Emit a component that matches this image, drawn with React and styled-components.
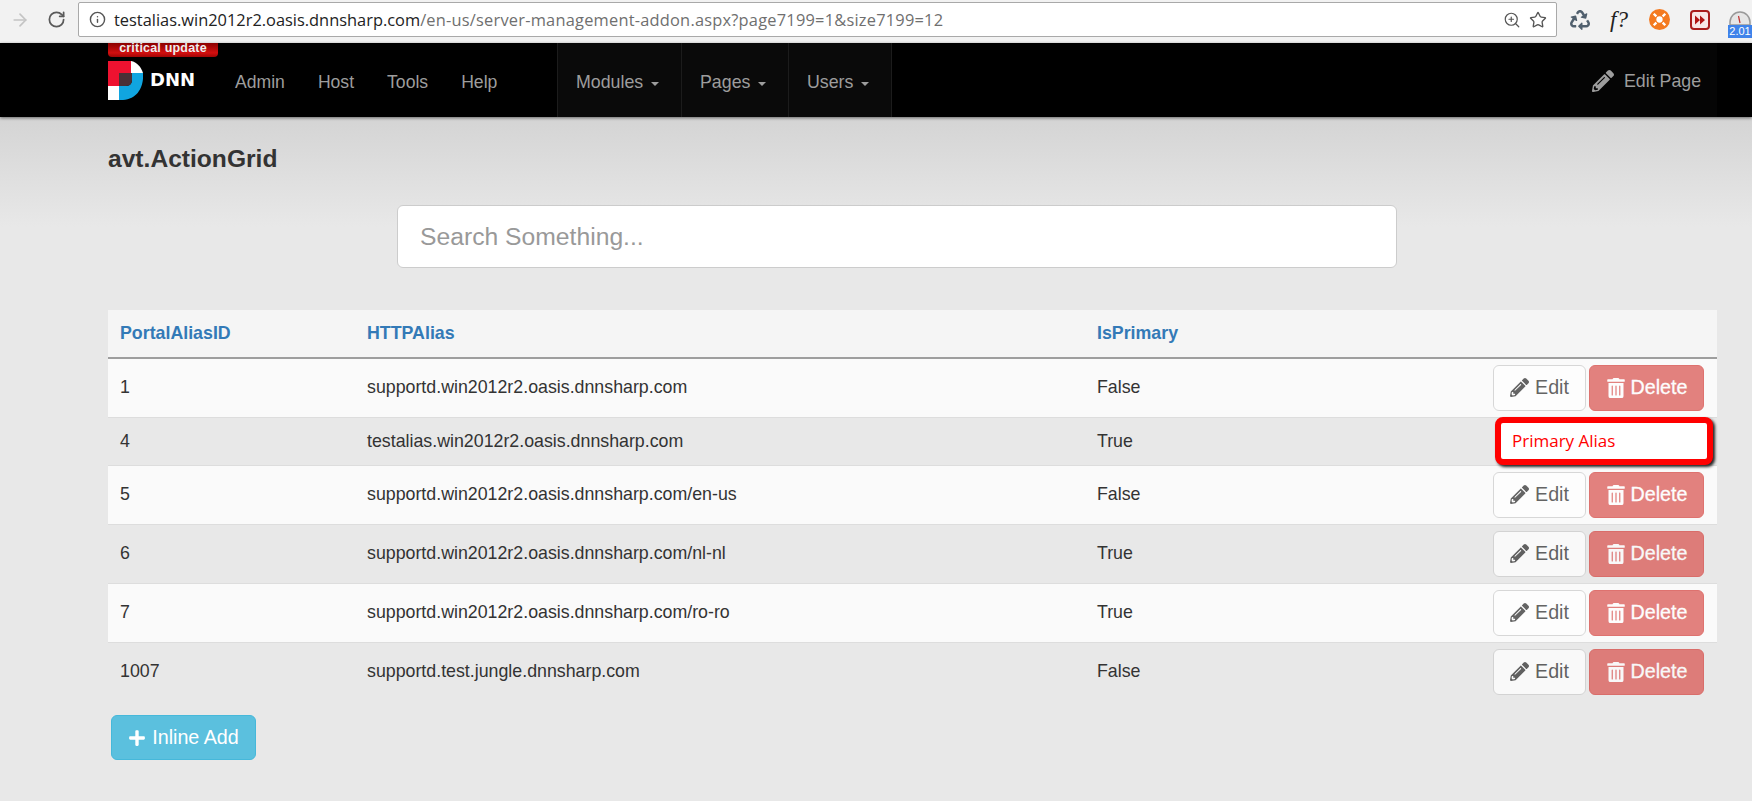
import React from 'react';
import styled, { createGlobalStyle } from 'styled-components';
import { ArrowRight, RotateCw, Info, ZoomIn, Star } from 'lucide-react';
import { FaPlus, FaRecycle, FaTrashAlt, FaPencilAlt } from 'react-icons/fa';

const GlobalStyle = createGlobalStyle`
  html, body {
    margin: 0;
    padding: 0;
    height: 100%;
    overflow: hidden;
    font-family: "Liberation Sans", Arial, sans-serif;
    color: #333;
  }
`;

const Page = styled.div`
  height: 801px;
  display: flex;
  flex-direction: column;
  background: #e8e8e8;
`;

/* browser chrome */
const BrowserBar = styled.div`
  height: 43px;
  box-sizing: border-box;
  padding: 2px 0 6px 10px;
  display: flex;
  align-items: center;
  background: #f2f2f2;
  flex: none;
`;

const NavArrow = styled.span`
  width: ${p => p.$width}px;
  flex: none;
  display: flex;
  color: ${p => p.$color};
`;

const AddressBar = styled.div`
  flex: none;
  width: 1479px;
  height: 35px;
  box-sizing: border-box;
  padding: 0 9px 0 10px;
  display: flex;
  align-items: center;
  background: #fff;
  border: 1px solid #a9a9a9;
  border-radius: 2px;
  font-family: "Open Sans", sans-serif;
  font-size: 16.4px;
  color: #222;
`;

const Url = styled.span`
  margin-left: 8px;
  flex: 1;
  white-space: nowrap;
  span {
    color: #6f6f6f;
    letter-spacing: 0.22px;
  }
`;

const BarIcons = styled.div`
  display: flex;
  align-items: center;
  gap: 8px;
  color: #555;
`;

const Extensions = styled.div`
  flex: 1;
  height: 36px;
  display: flex;
  align-items: center;
  padding-left: 13px;
  gap: 20px;
  overflow: hidden;
`;

const FunctionIcon = styled.span`
  font-family: "Liberation Serif", serif;
  font-style: italic;
  font-size: 23px;
  color: #222;
  width: 22px;
  margin-right: -3px;
`;

const SpeedIcon = styled.div`
  position: relative;
  flex: none;
  width: 24px;
  height: 36px;
  margin-left: -2px;
`;

const SpeedBadge = styled.span`
  position: absolute;
  left: 0;
  bottom: 0;
  width: 24px;
  height: 13px;
  background: #3f83ea;
  color: #fff;
  font-size: 11px;
  line-height: 13px;
  text-align: center;
`;

/* dnn nav */
const Nav = styled.header`
  position: relative;
  height: 74px;
  flex: none;
  display: flex;
  background: #000;
  padding-left: 108px;
  box-shadow: 0 1px 3px rgba(0, 0, 0, 0.5);
`;

const Brand = styled.div`
  width: 127px;
  flex: none;
`;

const UpdateBadge = styled.div`
  width: 110px;
  height: 14px;
  background: linear-gradient(#8a0000, #d30f0f 70%, #a00505);
  border-radius: 0 0 4px 4px;
  color: #eee;
  font-size: 12.5px;
  font-weight: bold;
  line-height: 10px;
  text-align: center;
  letter-spacing: 0.2px;
`;

const Logo = styled.div`
  display: flex;
  align-items: center;
  margin-top: 4px;
  gap: 7px;
`;

const LogoText = styled.span`
  font-family: "DejaVu Sans", sans-serif;
  font-size: 18px;
  line-height: 20px;
  font-weight: bold;
  color: #fff;
  margin-top: -2px;
`;

const NavLinks = styled.div`
  width: 322px;
  flex: none;
  display: flex;
  align-items: center;
  gap: 33px;
`;

const NavLink = styled.span`
  font-size: 17.6px;
  color: #9d9d9d;
  padding-top: 4px;
`;

const Dropdowns = styled.div`
  display: flex;
  background: #0a0a0a;
  border-right: 1px solid #1c1c1c;
`;

const Dropdown = styled.div`
  box-sizing: border-box;
  width: ${p => p.$width}px;
  display: flex;
  align-items: center;
  gap: 8px;
  padding: 4px 0 0 18px;
  border-left: 1px solid #1c1c1c;
  font-size: 17.8px;
  color: #9d9d9d;
`;

const Caret = styled.i`
  width: 0;
  height: 0;
  margin-top: 3px;
  border-top: 4px solid #9d9d9d;
  border-left: 4.5px solid transparent;
  border-right: 4.5px solid transparent;
`;

const EditPage = styled.div`
  margin-left: auto;
  width: 147px;
  margin-right: 35px;
  box-sizing: border-box;
  padding: 2px 0 0 22px;
  display: flex;
  align-items: center;
  gap: 10px;
  background: #050505;
  font-size: 17.8px;
  white-space: nowrap;
  color: #9d9d9d;
`;

/* content */
const Content = styled.main`
  flex: 1;
  padding: 0 35px 0 108px;
  background: linear-gradient(#d4d4d4, #e8e8e8 110px);
`;

const Title = styled.h2`
  margin: 0;
  padding-top: 29px;
  font-size: 24.6px;
  line-height: 26px;
  font-weight: bold;
  color: #333;
`;

const SearchRow = styled.div`
  display: flex;
  justify-content: center;
  margin-top: 33px;
  padding-right: 31px;
`;

const SearchBox = styled.input`
  box-sizing: border-box;
  width: 1000px;
  height: 63px;
  padding: 0 22px;
  background: #fff;
  border: 1px solid #ccc;
  border-radius: 6px;
  font-family: inherit;
  font-size: 24.7px;
  outline: none;
  &::placeholder {
    color: #999;
    opacity: 1;
  }
`;

const Table = styled.table`
  width: 1609px;
  margin-top: 42px;
  border-collapse: collapse;
  table-layout: fixed;
  font-size: 17.8px;
`;

const HeadRow = styled.tr`
  height: 48px;
  background: #f5f5f5;
  border-bottom: 2px solid #9e9e9e;
`;

const HeadCell = styled.th`
  padding: 0 12px;
  text-align: left;
  font-weight: bold;
  color: #337ab7;
  width: ${p => (p.$width ? `${p.$width}px` : 'auto')};
`;

const Row = styled.tr`
  height: ${p => (p.$short ? 48 : 59)}px;
  background: ${p => (p.$odd ? '#fafafa' : 'transparent')};
  border-bottom: 1px solid #dddddd;
  &:last-child {
    border-bottom: none;
  }
`;

const Cell = styled.td`
  padding: 0 12px;
  color: #333;
`;

const ActionCell = styled.td`
  padding: 0 13px 0 0;
  position: relative;
`;

const Actions = styled.div`
  display: flex;
  justify-content: flex-end;
  gap: 3px;
`;

const Button = styled.button`
  box-sizing: border-box;
  height: 46px;
  display: inline-flex;
  align-items: center;
  justify-content: center;
  gap: 6px;
  border-radius: 6px;
  font-family: inherit;
  font-size: 19.7px;
  padding: 0;
`;

const EditButton = styled(Button)`
  width: 93px;
  background: #fff;
  border: 1px solid #ccc;
  color: #333;
  opacity: 0.75;
`;

const DeleteButton = styled(Button)`
  width: 115px;
  background: #d9534f;
  border: 1px solid #d43f3a;
  color: #fff;
  opacity: 0.72;
  gap: 5px;
  -webkit-text-stroke: 0.3px #fff;
`;

const AliasTag = styled.div`
  position: absolute;
  right: 4px;
  top: -1px;
  box-sizing: border-box;
  width: 218px;
  height: 48px;
  padding-left: 11px;
  display: flex;
  align-items: center;
  background: #fff;
  border: 6px solid #f00;
  border-radius: 8px;
  box-shadow: 2px 2px 3px #222;
  font-family: "Open Sans", sans-serif;
  font-size: 17px;
  color: #f00;
`;

const AddButton = styled(Button)`
  width: 145px;
  height: 45px;
  margin: 14px 0 0 3px;
  background: #5bc0de;
  border: 1px solid #46b8da;
  color: #fff;
`;

const rows = [
  { id: '1', alias: 'supportd.win2012r2.oasis.dnnsharp.com', primary: 'False' },
  { id: '4', alias: 'testalias.win2012r2.oasis.dnnsharp.com', primary: 'True', tag: true },
  { id: '5', alias: 'supportd.win2012r2.oasis.dnnsharp.com/en-us', primary: 'False' },
  { id: '6', alias: 'supportd.win2012r2.oasis.dnnsharp.com/nl-nl', primary: 'True' },
  { id: '7', alias: 'supportd.win2012r2.oasis.dnnsharp.com/ro-ro', primary: 'True' },
  { id: '1007', alias: 'supportd.test.jungle.dnnsharp.com', primary: 'False' },
];

function DnnMark() {
  return (
    <svg width="35" height="39" viewBox="0 0 35 39">
      <path d="M0 0 H23 V12 H11 V25 H0 Z" fill="#ee1230" />
      <path d="M23 0 C29 1 33 6 35 12 H23 Z" fill="#fff" />
      <path d="M24 12 H35 C36 24 31 38 15 39 H11 V25 H18 C22 25 24 22 24 19 Z" fill="#10a5e0" />
      <path d="M11 12 H24 V19 C24 22 22 25 18 25 H11 Z" fill="#4a3036" />
      <rect x="0" y="25" width="11" height="14" fill="#fff" />
    </svg>
  );
}

function Lifebuoy() {
  return (
    <svg width="21" height="21" viewBox="0 0 20 20" style={{ flex: 'none' }}>
      <circle cx="10" cy="10" r="10" fill="#f47a20" />
      <circle cx="10" cy="10" r="3" fill="#fff" />
      <path d="M4.5 4.5 L7 7 M15.5 4.5 L13 7 M4.5 15.5 L7 13 M15.5 15.5 L13 13" stroke="#fff" strokeWidth="2.2" />
    </svg>
  );
}

function ForwardBox() {
  return (
    <svg width="20" height="20" viewBox="0 0 20 20" style={{ flex: 'none' }}>
      <rect x="1" y="1" width="18" height="18" rx="3" fill="#f7e6e6" stroke="#a81c1c" strokeWidth="2" />
      <path d="M5 5.5 L10 10 L5 14.5 Z M10 5.5 L15 10 L10 14.5 Z" fill="#b01515" />
    </svg>
  );
}

function Gauge() {
  return (
    <svg width="24" height="23" viewBox="0 0 24 23">
      <path d="M2 23 V20 A10 10 0 0 1 22 20 V23 Z" fill="#e6e6e6" stroke="#999" strokeWidth="1.5" />
      <path d="M12 21 L10.5 14" stroke="#c03030" strokeWidth="1.2" />
    </svg>
  );
}

export default function App() {
  return (
    <Page>
      <GlobalStyle />
      <BrowserBar>
        <NavArrow $width={37} $color="#c4c4c4"><ArrowRight size={20} /></NavArrow>
        <NavArrow $width={31} $color="#5a5a5a"><RotateCw size={19} strokeWidth={2.2} /></NavArrow>
        <AddressBar>
          <Info size={17} color="#555" />
          <Url>testalias.win2012r2.oasis.dnnsharp.com<span>/en-us/server-management-addon.aspx?page7199=1&amp;size7199=12</span></Url>
          <BarIcons>
            <ZoomIn size={18} strokeWidth={1.6} />
            <Star size={18} strokeWidth={1.8} />
          </BarIcons>
        </AddressBar>
        <Extensions>
          <FaRecycle size={20} color="#51606e" style={{ flex: 'none' }} />
          <FunctionIcon>f?</FunctionIcon>
          <Lifebuoy />
          <ForwardBox />
          <SpeedIcon>
            <Gauge />
            <SpeedBadge>2.01</SpeedBadge>
          </SpeedIcon>
        </Extensions>
      </BrowserBar>

      <Nav>
        <Brand>
          <UpdateBadge>critical update</UpdateBadge>
          <Logo>
            <DnnMark />
            <LogoText>DNN</LogoText>
          </Logo>
        </Brand>
        <NavLinks>
          <NavLink>Admin</NavLink>
          <NavLink>Host</NavLink>
          <NavLink>Tools</NavLink>
          <NavLink>Help</NavLink>
        </NavLinks>
        <Dropdowns>
          <Dropdown $width={124}>Modules <Caret /></Dropdown>
          <Dropdown $width={107}>Pages <Caret /></Dropdown>
          <Dropdown $width={103}>Users <Caret /></Dropdown>
        </Dropdowns>
        <EditPage><FaPencilAlt size={22} />Edit Page</EditPage>
      </Nav>

      <Content>
        <Title>avt.ActionGrid</Title>
        <SearchRow>
          <SearchBox placeholder="Search Something..." readOnly />
        </SearchRow>
        <Table>
          <thead>
            <HeadRow>
              <HeadCell $width={223}>PortalAliasID</HeadCell>
              <HeadCell $width={706}>HTTPAlias</HeadCell>
              <HeadCell $width={250}>IsPrimary</HeadCell>
              <HeadCell />
            </HeadRow>
          </thead>
          <tbody>
            {rows.map((row, i) => (
              <Row key={row.id} $odd={i % 2 === 0} $short={row.tag}>
                <Cell>{row.id}</Cell>
                <Cell>{row.alias}</Cell>
                <Cell>{row.primary}</Cell>
                <ActionCell>
                  {row.tag ? (
                    <AliasTag>Primary Alias</AliasTag>
                  ) : (
                    <Actions>
                      <EditButton><FaPencilAlt size={19} />Edit</EditButton>
                      <DeleteButton><FaTrashAlt size={20} />Delete</DeleteButton>
                    </Actions>
                  )}
                </ActionCell>
              </Row>
            ))}
          </tbody>
        </Table>
        <AddButton><FaPlus size={18} />Inline Add</AddButton>
      </Content>
    </Page>
  );
}
